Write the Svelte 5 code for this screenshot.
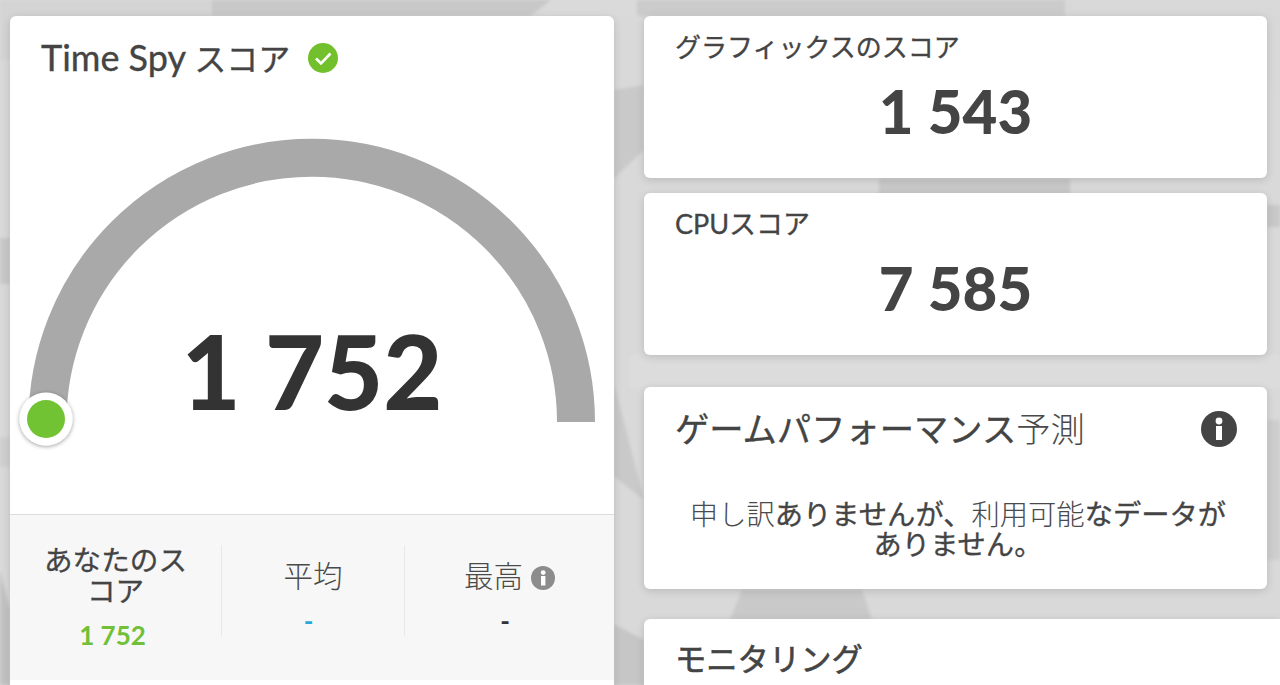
<script>
  const stats = [
    { label: 'あなたのスコア', value: '1 752', tone: 'green', lead: true },
    { label: '平均', value: '-', tone: 'blue', thin: true },
    { label: '最高', value: '-', tone: 'dark', thin: true, info: true }
  ];
  const shapes = [
    ['0,0 212,0 225,60 0,60', '#d4d4d4'],
    ['212,0 551,0 530,16 212,16', '#c8c8c8'],
    ['551,0 637,0 637,16 540,16', '#dadada'],
    ['637,0 1065,0 1065,16 637,16', '#cbcbcb'],
    ['1065,0 1280,0 1280,90 1065,16', '#d8d8d8'],
    ['0,238 10,238 10,284 0,284', '#c8c8c8'],
    ['0,437 10,437 10,467 0,467', '#cfcfcf'],
    ['0,570 10,610 10,685 0,685', '#c2c2c2'],
    ['614,90 644,85 644,150 614,178', '#c9c9c9'],
    ['614,384 644,500 614,476', '#c9c9c9'],
    ['614,624 644,640 644,685 614,685', '#c6c6c6'],
    ['630,355 1280,355 1280,388 630,388', '#dcdcdc'],
    ['879,179 1070,179 1070,194 879,194', '#c8c8c8'],
    ['742,590 862,590 872,620 730,620', '#c9c9c9'],
    ['1267,205 1280,205 1280,227 1267,227', '#c8c8c8'],
    ['1267,420 1280,420 1280,560 1267,560', '#cecece']
  ];
</script>

<main class="page">
  <svg class="backdrop" viewBox="0 0 1280 685" aria-hidden="true">
    {#each shapes as [points, fill]}
      <polygon {points} {fill} />
    {/each}
  </svg>

  <section class="card score">
    <header class="score-head">
      <h1>Time Spy <span class="kana">スコア</span></h1>
      <svg class="check" viewBox="0 0 30 30" aria-hidden="true">
        <circle cx="15" cy="15" r="15" fill="#72c02c" />
        <path d="M8 15.5l5 5 9.5-10" fill="none" stroke="#fff" stroke-width="2.6" />
      </svg>
    </header>
    <div class="gauge">
      <svg viewBox="0 0 604 340" aria-hidden="true">
        <defs>
          <filter id="dot-shadow" x="-30%" y="-30%" width="160%" height="160%">
            <feDropShadow dx="0" dy="1" stdDeviation="2" flood-color="#000" flood-opacity=".4" />
          </filter>
        </defs>
        <path d="M37.5 306A264 264 0 0 1 566 306" fill="none" stroke="#a9a9a9" stroke-width="38" />
        <circle cx="36" cy="303" r="26.5" fill="#fff" filter="url(#dot-shadow)" />
        <circle cx="36" cy="303" r="19" fill="#72c333" />
      </svg>
      <div class="big-number">1 752</div>
    </div>
    <div class="stats">
      {#each stats as s}
        <div class="stat" class:lead={s.lead}>
          <div class="stat-label" class:thin={s.thin}>
            {s.label}
            {#if s.info}
              <svg class="mini-info" viewBox="0 0 24 24" aria-hidden="true">
                <circle cx="12" cy="12" r="12" fill="#8c8c8c" />
                <rect x="10" y="10" width="4.4" height="9.5" fill="#fff" />
                <circle cx="12.2" cy="6.6" r="2.4" fill="#fff" />
              </svg>
            {/if}
          </div>
          <div class="stat-value {s.tone}">{s.value}</div>
        </div>
      {/each}
    </div>
  </section>

  <div class="side">
    <section class="card sub first">
      <h2>グラフィックスのスコア</h2>
      <div class="sub-number">1 543</div>
    </section>
    <section class="card sub">
      <h2 class="cpu">CPUスコア</h2>
      <div class="sub-number">7 585</div>
    </section>
    <section class="card predict">
      <div class="predict-head">
        <h3>ゲームパフォーマンス<span class="thin">予測</span></h3>
        <svg class="big-info" viewBox="0 0 36 36" aria-hidden="true">
          <circle cx="18" cy="18" r="18" fill="#444" />
          <rect x="15" y="15" width="6" height="14" fill="#fff" />
          <circle cx="18" cy="10" r="3.4" fill="#fff" />
        </svg>
      </div>
      <p><span class="thin">申し訳</span>ありませんが、<span class="thin">利用可能</span>なデータがありません。</p>
    </section>
    <section class="card monitor">
      <h3>モニタリング</h3>
    </section>
  </div>
</main>

<style>
  :global(body) {
    margin: 0;
    background: #d9d9d9;
  }
  .page {
    position: relative;
    height: 685px;
    overflow: hidden;
    box-sizing: border-box;
    padding: 16px 0 0 10px;
    display: grid;
    grid-template-columns: 604px 1fr;
    column-gap: 30px;
    align-items: start;
    font-family: Lato, "Noto Sans CJK JP", sans-serif;
    color: #444;
  }
  .backdrop {
    position: absolute;
    inset: 0;
    width: 1280px;
    height: 685px;
    filter: blur(1.5px);
  }
  .card {
    position: relative;
    background: #fff;
    border-radius: 6px;
    box-shadow: 0 2px 8px rgba(0, 0, 0, 0.14);
  }
  h1, h2, h3, p {
    margin: 0;
    font-weight: 400;
    -webkit-text-stroke: 0.35px currentColor;
  }
  .thin {
    font-weight: 300;
    color: #4a4a4a;
    -webkit-text-stroke: 0;
  }
  .score {
    height: 720px;
  }
  .score-head {
    display: flex;
    align-items: center;
    gap: 18px;
    padding: 20px 0 0 31px;
    height: 44px;
  }
  h1 {
    font-size: 36px;
    line-height: 44px;
    white-space: nowrap;
  }
  .kana {
    font-size: 32px;
  }
  .check {
    width: 30px;
    height: 30px;
    flex: none;
  }
  .gauge {
    position: relative;
    height: 434px;
  }
  .gauge svg {
    position: absolute;
    left: 0;
    top: 36px;
    width: 604px;
    height: 340px;
    overflow: visible;
  }
  .big-number {
    position: absolute;
    left: 0;
    right: 0;
    top: 226px;
    text-align: center;
    font-size: 102px;
    line-height: 130px;
    font-weight: 900;
    color: #333;
  }
  .stats {
    display: grid;
    grid-template-columns: 211px 183px 210px;
    height: 166px;
    background: #f7f7f7;
    border-top: 1px solid #dcdcdc;
    box-sizing: border-box;
    padding-top: 30px;
  }
  .stat {
    height: 91px;
    text-align: center;
    border-left: 1px solid #e8e8e8;
  }
  .stat.lead {
    border-left: none;
    padding: 0 33px;
  }
  .stat-label {
    font-size: 28.6px;
    line-height: 31px;
    min-height: 62px;
    box-sizing: border-box;
    -webkit-text-stroke: 0.3px currentColor;
  }
  .stat-label.thin {
    font-size: 29.5px;
    padding-top: 15px;
    min-height: 61px;
    font-weight: 300;
    -webkit-text-stroke: 0;
  }
  .mini-info {
    width: 24px;
    height: 24px;
    vertical-align: -3px;
  }
  .stat-value {
    font-size: 26px;
    line-height: 30px;
    font-weight: 700;
    margin-top: 13px;
    padding-right: 6px;
  }
  .stat-label.thin + .stat-value {
    margin-top: 0;
    padding-right: 9px;
  }
  .green { color: #72c037; }
  .blue { color: #29a8dc; }
  .dark { color: #333; }

  .side {
    display: flex;
    flex-direction: column;
    position: relative;
  }
  .sub {
    height: 162px;
    margin-right: 13px;
    padding: 14px 0 0 31px;
    box-sizing: border-box;
  }
  .first {
    margin-bottom: 15px;
  }
  h2 {
    font-size: 26px;
    line-height: 34px;
  }
  h2.cpu {
    font-size: 27px;
  }
  .sub-number {
    text-align: center;
    padding-right: 31px;
    font-size: 60px;
    line-height: 76px;
    font-weight: 900;
    margin-top: 9px;
  }
  .predict {
    margin: 32px 13px 30px 0;
    height: 202px;
    padding: 20px 30px 0 31px;
    box-sizing: border-box;
  }
  .predict-head {
    display: flex;
    align-items: center;
    justify-content: space-between;
  }
  h3 {
    font-size: 34.3px;
    line-height: 44px;
  }
  .big-info {
    width: 36px;
    height: 36px;
  }
  p {
    margin: 48px 8px 0 12px;
    text-align: center;
    font-size: 28.3px;
    line-height: 30px;
  }
  .monitor {
    height: 120px;
    border-radius: 6px 0 0 6px;
    padding: 18px 0 0 31px;
    box-sizing: border-box;
  }
  .monitor h3 {
    font-size: 31.3px;
    -webkit-text-stroke: 0.6px currentColor;
  }
</style>
